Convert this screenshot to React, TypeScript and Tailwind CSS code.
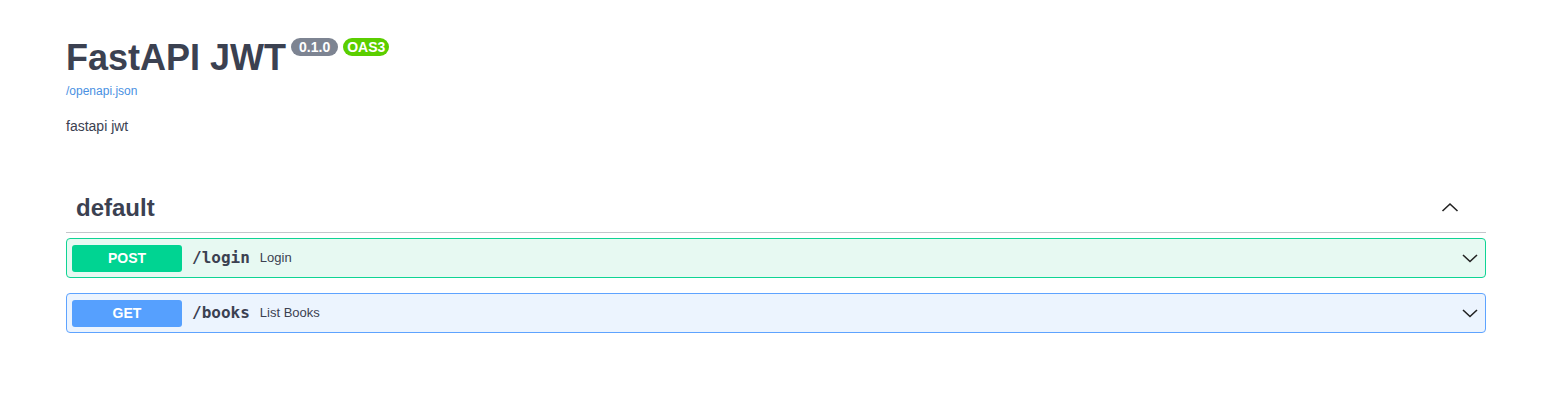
import React from "react";

type Method = "POST" | "GET";

interface Operation {
  method: Method;
  path: string;
  summary: string;
}

const operations: Operation[] = [
  { method: "POST", path: "/login", summary: "Login" },
  { method: "GET", path: "/books", summary: "List Books" },
];

function ChevronDown() {
  return (
    <svg width="20" height="20" viewBox="0 0 20 20" className="shrink-0">
      <path d="M3 7 L10 13.5 L17 7" fill="none" stroke="#222" strokeWidth="1.6" />
    </svg>
  );
}

function ChevronUp() {
  return (
    <svg width="20" height="20" viewBox="0 0 20 20" className="shrink-0">
      <path d="M2.5 13 L10 6 L17.5 13" fill="none" stroke="#222" strokeWidth="1.6" />
    </svg>
  );
}

function OperationRow({ op }: { op: Operation }) {
  const isPost = op.method === "POST";
  return (
    <div
      className={`mb-[15px] rounded-[4px] border ${
        isPost ? "border-[#0fd494] bg-[#e7f9f2]" : "border-[#5ea3ff] bg-[#ecf4fe]"
      }`}
    >
      <div className="flex h-[38px] items-center px-[5px]">
        <span
          className={`flex h-[27px] w-[110px] items-center justify-center rounded-[3px] text-[14px] font-bold leading-[16px] text-white ${
            isPost ? "bg-[#00d492]" : "bg-[#56a0fe]"
          }`}
        >
          {op.method}
        </span>
        <span
          className="px-[10px] text-[16px] font-bold leading-[20px] text-[#3b4151]"
          style={{ fontFamily: "'DejaVu Sans Mono', monospace" }}
        >
          {op.path}
        </span>
        <span className="flex-1 text-[13px] leading-[16px] text-[#3b4151]">{op.summary}</span>
        <ChevronDown />
      </div>
    </div>
  );
}

export default function App() {
  return (
    <div
      className="min-h-[403px] w-full bg-white"
      style={{ fontFamily: "'Liberation Sans', Arial, sans-serif" }}
    >
      <div className="ml-[66px] w-[1420px]">
        <div className="pt-[37px]">
          <div className="flex items-start">
            <h2 className="text-[36px] font-bold leading-[41px] text-[#3b4151]">FastAPI JWT</h2>
            <span className="ml-[5px] mt-[1px] rounded-[57px] bg-[#7d8492] px-[8px] py-[1px] text-[14px] font-bold leading-[16px] text-white">
              0.1.0
            </span>
            <span className="ml-[5px] mt-[1px] rounded-[57px] bg-[#5bce00] px-[4px] py-[1px] text-[14px] font-bold leading-[16px] text-white">
              OAS3
            </span>
          </div>
          <a href="#" className="block pt-[6px] text-[12px] leading-[14px] text-[#4990e2]">
            /openapi.json
          </a>
          <p className="mt-[20px] text-[14px] leading-[16px] text-[#3b4151]">fastapi jwt</p>
        </div>

        <div className="mt-[54px]">
          <div className="mb-[5px] flex items-center border-b border-[#c4c6cb] pb-[9px] pl-[10px] pr-[26px] pt-[5px]">
            <h3 className="flex-1 text-[24px] font-bold leading-[30px] text-[#3b4151]">default</h3>
            <ChevronUp />
          </div>
          {operations.map((op) => (
            <OperationRow key={op.path} op={op} />
          ))}
        </div>
      </div>
    </div>
  );
}
